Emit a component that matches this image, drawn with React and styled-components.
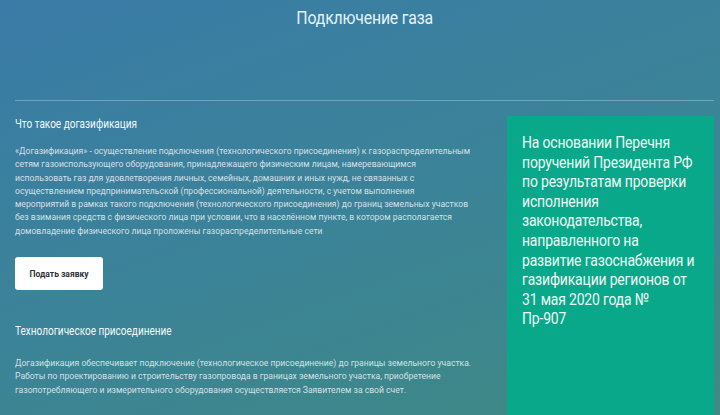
import React from 'react';
import styled, {createGlobalStyle} from 'styled-components';

const GlobalStyle = createGlobalStyle`
    html, body {
        margin: 0;
        padding: 0;
    }
    body {
        font-family: Roboto, "Noto Sans", sans-serif;
        background: #3b82a0;
    }
`

const Page = styled.div`
    width: 720px;
    height: 415px;
    overflow: hidden;
    box-sizing: border-box;
    padding: 0 6px 0 15px;
    background: linear-gradient(160deg, #3a7ba7 0%, #3b8398 50%, #3f8a84 100%);
    color: #fff;
`

const Title = styled.h1`
    margin: 0;
    padding-top: 7px;
    height: 100px;
    box-sizing: border-box;
    text-align: center;
    font-size: 18px;
    font-weight: 400;
    color: #e4f3f8;
    letter-spacing: -0.2px;
`

// the site uses a condensed face, squeeze Roboto to match
const Condensed = styled.span`
    display: inline-block;
    transform: scaleX(${p => p.scale || 0.88});
    transform-origin: ${p => p.origin || 'center'};
    white-space: nowrap;
`

const Divider = styled.hr`
    margin: 0;
    border: none;
    border-top: 1px solid rgba(255, 255, 255, 0.28);
`

const Content = styled.div`
    display: flex;
    gap: 8px;
`

const Main = styled.div`
    flex: 1;
    padding-top: 14px;
`

const Heading = styled.h2`
    margin: 0;
    font-size: 13px;
    font-weight: 400;
    color: #f2f8fa;
    line-height: 18px;
`

const Text = styled.p`
    margin: ${p => p.top || 12}px 0 0;
    font-size: 8.6px;
    line-height: 13.3px;
    color: rgba(255, 255, 255, 0.78);
`

const Button = styled.button`
    margin-top: 19px;
    width: 88px;
    height: 33px;
    border: none;
    border-radius: 3px;
    background: #fff;
    color: #2f3438;
    font-family: Roboto, sans-serif;
    font-weight: 700;
    font-size: 8.5px;
    cursor: pointer;
`

const Section = styled.div`
    margin-top: ${p => p.top || 0}px;
`

const Notice = styled.aside`
    width: 207px;
    flex: none;
    margin-top: 15px;
    height: 320px;
    box-sizing: border-box;
    padding: 17px 10px 0 15px;
    background: #0aa88a;
    color: #eef8f4;
    font-size: 17px;
    line-height: 19.6px;
    letter-spacing: -0.2px;
`

const NoticeLine = styled.div`
    transform: scaleX(0.82);
    transform-origin: left;
    white-space: nowrap;
`

const noticeLines = [
    'На основании Перечня',
    'поручений Президента РФ',
    'по результатам проверки',
    'исполнения',
    'законодательства,',
    'направленного на',
    'развитие газоснабжения и',
    'газификации регионов от',
    '31 мая 2020 года №',
    'Пр-907',
]

const App = () => {
    return (
        <>
            <GlobalStyle />
            <Page>
                <Title><Condensed>Подключение газа</Condensed></Title>
                <Divider />
                <Content>
                    <Main>
                        <Section>
                            <Heading><Condensed scale={0.77} origin="left">Что такое догазификация</Condensed></Heading>
                            <Text>
                                «Догазификация» - осуществление подключения (технологического присоединения) к газораспределительным<br />
                                сетям газоиспользующего оборудования, принадлежащего физическим лицам, намеревающимся<br />
                                использовать газ для удовлетворения личных, семейных, домашних и иных нужд, не связанных с<br />
                                осуществлением предпринимательской (профессиональной) деятельности, с учетом выполнения<br />
                                мероприятий в рамках такого подключения (технологического присоединения) до границ земельных участков<br />
                                без взимания средств с физического лица при условии, что в населённом пункте, в котором располагается<br />
                                домовладение физического лица проложены газораспределительные сети
                            </Text>
                            <Button>Подать заявку</Button>
                        </Section>
                        <Section top={32}>
                            <Heading><Condensed scale={0.77} origin="left">Технологическое присоединение</Condensed></Heading>
                            <Text top={17}>
                                Догазификация обеспечивает подключение (технологическое присоединение) до границы земельного участка.<br />
                                Работы по проектированию и строительству газопровода в границах земельного участка, приобретение<br />
                                газопотребляющего и измерительного оборудования осуществляется Заявителем за свой счет.
                            </Text>
                        </Section>
                    </Main>
                    <Notice>
                        {noticeLines.map((line, i) => (
                            <NoticeLine key={i}>{line}</NoticeLine>
                        ))}
                    </Notice>
                </Content>
            </Page>
        </>
    )
}

export default App;
